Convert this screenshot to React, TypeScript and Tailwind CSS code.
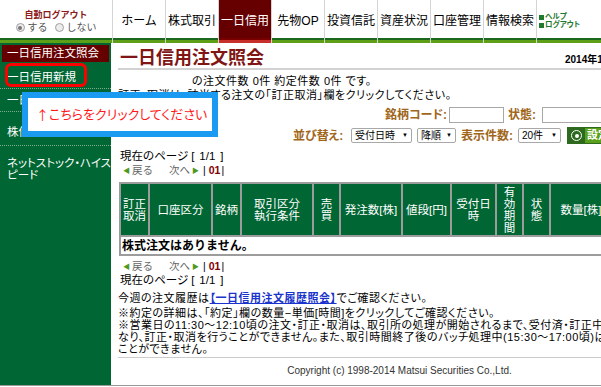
import React from "react";

const navItems = ["ホーム", "株式取引", "一日信用", "先物OP", "投資信託", "資産状況", "口座管理", "情報検索"];

const cols = [
  { label: ["訂正", "取消"], w: "w-[29px]" },
  { label: ["口座区分"], w: "w-[63px]" },
  { label: ["銘柄"], w: "w-[29px]" },
  { label: ["取引区分", "執行条件"], w: "w-[72px]" },
  { label: ["売", "買"], w: "w-[27px]" },
  { label: ["発注数[株]"], w: "w-[62px]" },
  { label: ["値段[円]"], w: "w-[49px]" },
  { label: ["受付日", "時"], w: "w-[45px]" },
  { label: ["有", "効", "期", "間"], w: "w-[27px]" },
  { label: ["状", "態"], w: "w-[27px]" },
  { label: ["数量[株]"], w: "w-[62px]" },
  { label: ["約定[株]"], w: "w-[62px]" },
];

const Radio = ({ on }: { on?: boolean }) => (
  <span className="inline-flex h-[9px] w-[9px] items-center justify-center rounded-full border border-[#a0a0a0] bg-[#ececec]">
    {on && <span className="h-[4px] w-[4px] rounded-full bg-[#777]" />}
  </span>
);

const Stripe = ({ red }: { red?: boolean }) => (
  <div>
    <div className={red ? "h-[2px] bg-[#7a0000]" : "h-[2px] bg-[#1b671d]"} />
    <div className={red ? "h-[3px] bg-[#c62f2a]" : "h-[3px] bg-[#5e9f18]"} />
  </div>
);

const Header = () => (
  <div className="flex h-[43px]">
    <div className="flex w-[113px] flex-col border-r border-[#d4d4d4]">
      <div className="flex h-[38px] flex-col items-center pt-[10px]">
        <div className="text-[9px] font-bold leading-[11px] text-[#8b1a1a]">自動ログアウト</div>
        <div className="mt-[1px] flex items-center gap-[3px] text-[10px] leading-[11px] text-[#555]">
          <Radio on />
          <span>する</span>
          <span className="ml-[4px] flex"><Radio /></span>
          <span>しない</span>
        </div>
      </div>
      <Stripe />
    </div>
    {navItems.map((item) => (
      <div key={item} className="flex w-[53px] flex-col border-r border-[#d4d4d4]">
        <div
          className={
            item === "一日信用"
              ? "flex h-[38px] items-center justify-center bg-[#660000] pt-[3px] text-[12px] text-white"
              : "flex h-[38px] items-center justify-center pt-[3px] text-[12px] text-black"
          }
        >
          {item}
        </div>
        <Stripe red={item === "一日信用"} />
      </div>
    ))}
    <div className="flex flex-1 flex-col">
      <div className="flex h-[38px] flex-col justify-center pl-[2px] pt-[4px] text-[7.5px] font-bold leading-[8px] text-[#1f7a2f] [font-feature-settings:'palt']">
        <span className="flex items-center">
          <span className="mr-[1px] inline-block h-[5px] w-[5px] bg-[#1f7a2f]" />
          ヘルプ
        </span>
        <span className="flex items-center">
          <span className="mr-[1px] inline-block h-[5px] w-[5px] bg-[#1f7a2f]" />
          ログアウト
        </span>
      </div>
      <Stripe />
    </div>
  </div>
);

const Sidebar = () => (
  <div className="w-[111px] shrink-0 bg-[#006633] pt-[2px] text-[11.5px] text-white [font-feature-settings:'palt']">
    <div className="mx-[2px] h-[17px] bg-[#660000] pl-[5px] leading-[17px]">一日信用注文照会</div>
    <div className="h-[27px] border-b border-dotted border-[#7fae8f] pl-[7px] pt-[8px] leading-[14px]">一日信用新規</div>
    <div className="h-[23px] border-b border-dotted border-[#7fae8f] pl-[7px] pt-[4px] leading-[14px]">一日信用返済</div>
    <div className="h-[34px] border-b border-dotted border-[#7fae8f] pl-[7px] pt-[13px] leading-[14px]">株価照会</div>
    <div className="pl-[7px] pt-[11px] leading-[12px]">
      ネットストック・ハイス
      <br />
      ピード
    </div>
  </div>
);

const Select = ({ label, w }: { label: string; w: string }) => (
  <span className={"flex h-[15px] items-center justify-between rounded-[2px] border border-[#a8a8a8] bg-white px-[3px] text-[10px] leading-[13px] " + w}>
    <span>{label}</span>
    <span className="text-[6px]">▼</span>
  </span>
);

const Pager = () => (
  <div className="flex items-center text-[10.5px] leading-[13px] text-[#666]">
    <span className="ml-[5px] text-[7px] text-[#4f9a1c]">◀</span>
    <span className="ml-[2px]">戻る</span>
    <span className="ml-[16px]">次へ</span>
    <span className="ml-[2px] text-[7px] text-[#4f9a1c]">▶</span>
    <span className="ml-[4px] text-black">|</span>
    <span className="ml-[3px] font-bold text-[#800000]">01</span>
    <span className="ml-[1px] text-black">|</span>
  </div>
);

const PageNo = ({ className }: { className: string }) => (
  <div className={"ml-[2px] flex whitespace-nowrap text-[11.5px] leading-[13px] [font-feature-settings:'palt'] " + className}>
    <span className="shrink-0">現在のページ</span>
    <span className="ml-[3px]">[</span>
    <span className="ml-[5px]">1/1</span>
    <span className="ml-[5px]">]</span>
  </div>
);

const Main = () => (
  <div className="flex-1 overflow-hidden">
    <div className="w-[570px] pl-[7px] text-[11px]">
      {/* title */}
      <div className="grid h-[27px] grid-cols-[447px_1fr] items-start border-b-2 border-[#d2d2d2] pt-[5px]">
        <div className="ml-[2px] text-[18px] font-bold leading-[20px] text-[#801515]">一日信用注文照会</div>
        <div className="pt-[6px] text-[10px] font-bold leading-[11px]">2014年10月01日 現在</div>
      </div>

      <div className="mt-[4px] leading-[14px] tracking-[0.5px] [font-feature-settings:'palt']">
        <div className="ml-[74px]">の注文件数 0件 約定件数 0件 です。</div>
        <div>訂正・取消は、該当する注文の「訂正取消」欄をクリックしてください。</div>
      </div>

      {/* search row */}
      <div className="mt-[5px] flex h-[16px] items-center pl-[267px] [font-feature-settings:'palt']">
        <span className="w-[63px] text-[12px] font-bold text-[#a0661a]">銘柄コード:</span>
        <span className="ml-[1px] h-[16px] w-[55px] border border-[#a8a8a8] bg-white" />
        <span className="ml-[4px] w-[34px] text-[12px] font-bold text-[#a0661a]">状態:</span>
        <span className="h-[16px] w-[90px] border border-[#a8a8a8] bg-white" />
      </div>

      <div className="mt-[5px] flex h-[15px] items-center pl-[175px] [font-feature-settings:'palt']">
        <span className="w-[58px] text-[12px] font-bold text-[#a0661a]">並び替え:</span>
        <Select label="受付日時" w="w-[61px]" />
        <span className="ml-[5px]"><Select label="降順" w="w-[39px]" /></span>
        <span className="ml-[5px] w-[57px] text-[12px] font-bold text-[#a0661a]">表示件数:</span>
        <Select label="20件" w="w-[43px]" />
        <span className="ml-[6px] flex h-[17px] w-[52px] overflow-hidden border border-[#2f6b1f]">
          <span className="flex w-[17px] items-center justify-center bg-[#2d6a1e]">
            <span className="flex h-[11px] w-[11px] items-center justify-center rounded-full border-[1.5px] border-white">
              <span className="h-[4px] w-[4px] rounded-full bg-white" />
            </span>
          </span>
          <span className="flex-1 bg-[#5aa01c] pl-[2px] text-[11px] font-bold leading-[15px] text-white">設定</span>
        </span>
      </div>

      <PageNo className="mt-[7px]" />
      <div className="mt-[1px]">
        <Pager />
      </div>

      {/* table */}
      <table className="ml-[1px] mt-[5px] table-fixed border-collapse text-[11.5px] leading-[12px]">
        <thead>
          <tr className="h-[53px] bg-[#006633] text-white">
            {cols.map((c) => (
              <th key={c.label.join("")} className={"border-2 border-[#9c9c9c] p-0 text-center font-normal " + c.w}>
                {c.label.map((l) => (
                  <div key={l}>{l}</div>
                ))}
              </th>
            ))}
          </tr>
        </thead>
        <tbody>
          <tr>
            <td colSpan={12} className="h-[19px] border-2 border-[#9c9c9c] px-[1px] text-[12px] font-bold leading-[14px]">
              株式注文はありません。
            </td>
          </tr>
        </tbody>
      </table>

      <div className="mt-[4px]">
        <Pager />
      </div>
      <PageNo className="mt-[1px]" />

      <div className="mt-[5px] leading-[13px] tracking-[0.5px] [font-feature-settings:'palt']">
        今週の注文履歴は<span className="font-bold text-[#1a33cc] underline">【一日信用注文履歴照会】</span>でご確認ください。
      </div>
      <div className="mt-[2px] whitespace-nowrap leading-[12px] tracking-[0.5px] [font-feature-settings:'palt']">
        <div>※約定の詳細は、「約定」欄の数量−単価[時間]をクリックしてご確認ください。</div>
        <div>※営業日の11:30～12:10頃の注文・訂正・取消は、取引所の処理が開始されるまで、受付済・訂正中</div>
        <div>なり、訂正・取消を行うことができません。また、取引時間終了後のバッチ処理中(15:30～17:00頃)は</div>
        <div>ことができません。</div>
      </div>

      <div className="mt-[2px] border-t border-[#cccccc]" />
      <div className="mt-[7px] text-center text-[10px] leading-[12px] text-[#333]">
        Copyright (c) 1998-2014 Matsui Securities Co.,Ltd.
      </div>
    </div>
  </div>
);

export default function App() {
  return (
    <div className="relative h-[387px] w-[601px] overflow-hidden bg-white font-['Liberation_Sans','Noto_Sans_CJK_JP',sans-serif] text-black">
      <Header />
      <div className="flex h-[343px] border-b border-[#999]">
        <Sidebar />
        <Main />
      </div>

      {/* annotation overlays */}
      <div className="absolute left-[5px] top-[63px] h-[24px] w-[82px] rounded-[6px] border-[3px] border-[#ff0000]" />
      <div className="absolute left-[22px] top-[92px] flex h-[45px] w-[196px] items-center border-[6px] border-[#1a9af0] bg-white pl-[8px] text-[13px] text-[#ff1a1a] [font-feature-settings:'palt']">
        <span className="font-['Noto_Sans_CJK_JP',sans-serif]">↑</span>
        こちらをクリックしてください
      </div>
    </div>
  );
}
